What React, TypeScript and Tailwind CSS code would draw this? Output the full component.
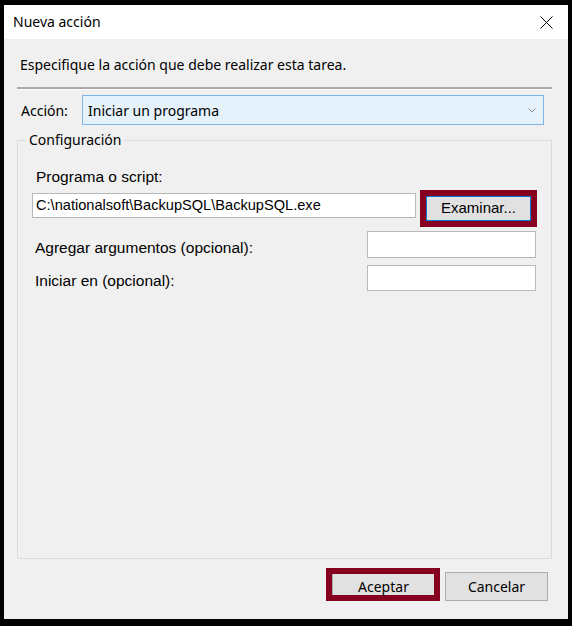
const ui = "font-['Noto_Sans',sans-serif]";
const classic = "font-['Liberation_Sans',Arial,sans-serif]";

function CloseIcon() {
  return (
    <svg width="13" height="13" viewBox="0 0 13 13" className="block">
      <path d="M0.5 0.5 L12.5 12.5 M12.5 0.5 L0.5 12.5" stroke="#000" strokeWidth="1" fill="none" />
    </svg>
  );
}

function Chevron() {
  return (
    <svg width="8" height="5" viewBox="0 0 8 5" className="block">
      <path d="M0.5 0.5 L4 4 L7.5 0.5" stroke="#8a8a8a" strokeWidth="1" fill="none" />
    </svg>
  );
}

function TextBox({ value, className }: { value?: string; className: string }) {
  return (
    <div
      className={`flex items-center border border-[#b9b9b9] bg-white pl-[3px] text-[14.6px] text-black ${classic} ${className}`}
    >
      {value}
    </div>
  );
}

export default function App() {
  return (
    <div className="flex h-[626px] w-[572px] bg-black pt-[5px] pr-[5px] pb-[7px] pl-[4px]">
      <div className="flex flex-1 flex-col bg-[#f0f0f0]">
        {/* title bar */}
        <div className={`flex h-[34px] items-center justify-between bg-white pl-[9px] pr-[15px] text-[14px] text-black ${ui}`}>
          <span className="-mt-[2px]">Nueva acción</span>
          <CloseIcon />
        </div>

        <div className={`flex flex-1 flex-col pl-[13px] pr-[16px] text-[14px] text-black ${ui}`}>
          <p className="mt-[16px] h-[20px] pl-[3px] leading-[20px]">
            Especifique la acción que debe realizar esta tarea.
          </p>

          <div className="mt-[12px] h-[2px] bg-[#a9a9a9]" />
          <div className="h-[1px] bg-white" />

          <div className="mt-[5px] flex h-[30px] items-center">
            <span className="w-[65px] pl-[4px]">Acción:</span>
            <div className="mr-[8px] flex h-full flex-1 items-center justify-between border border-[#7eb4ea] bg-[#e5f1fb] pl-[5px] pr-[7px]">
              <span>Iniciar un programa</span>
              <Chevron />
            </div>
          </div>

          <fieldset className="mt-[5px] h-[429px] border border-[#dcdcdc]">
            <legend className="ml-[8px] px-[3px] leading-[20px]">Configuración</legend>

            <div className="px-[14px]">
              <p className={`mt-[17px] h-[20px] pl-[4px] text-[15.5px] leading-[20px] ${classic}`}>
                Programa o script:
              </p>

              <div className="mt-[3px] flex items-start gap-[4px]">
                <TextBox value="C:\nationalsoft\BackupSQL\BackupSQL.exe" className="mt-[3px] h-[25px] w-[384px]" />
                <div className="h-[37px] w-[117px] border-[6px] border-[#86001f]">
                  <div className={`flex h-full items-center justify-center border border-[#0078d7] bg-[#e1e1e1] text-[15px] ${classic}`}>
                    Examinar...
                  </div>
                </div>
              </div>

              <div className="mt-[4px] flex h-[27px] items-center justify-between pr-[1px]">
                <span className={`pl-[3px] pt-[6px] text-[15.5px] ${classic}`}>Agregar argumentos (opcional):</span>
                <TextBox className="h-[27px] w-[169px]" />
              </div>

              <div className="mt-[7px] flex h-[26px] items-center justify-between pr-[1px]">
                <span className={`pl-[3px] pt-[6px] text-[15.5px] ${classic}`}>Iniciar en (opcional):</span>
                <TextBox className="h-[26px] w-[169px]" />
              </div>
            </div>
          </fieldset>

          <div className="mt-[9px] flex items-end justify-end gap-[5px] pr-[4px]">
            <div className="h-[33px] w-[114px] border-[6px] border-[#86001f]">
              <div className="flex h-full items-center justify-center border-l border-[#adadad] bg-[#e1e1e1] pt-[3px]">
                Aceptar
              </div>
            </div>
            <div className="flex h-[29px] w-[103px] items-center justify-center border border-[#adadad] bg-[#e1e1e1]">
              Cancelar
            </div>
          </div>
        </div>
      </div>
    </div>
  );
}
